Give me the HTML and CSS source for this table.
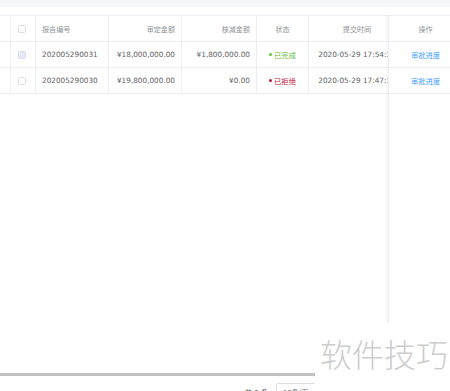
FILE: index.html
```html
<!DOCTYPE html>
<html lang="zh">
<head>
<meta charset="utf-8">
<link rel="stylesheet" href="styles.css">
</head>
<body>
<div class="page">
  <div class="topbar"></div>
  <div class="table-wrap">
    <div class="main">
      <div class="row head">
        <div class="cell"></div>
        <div class="cell center"><span class="cb"></span></div>
        <div class="cell left">报告编号</div>
        <div class="cell right">审定金额</div>
        <div class="cell right">核减金额</div>
        <div class="cell center">状态</div>
        <div class="cell center">提交时间</div>
      </div>
      <div class="row">
        <div class="cell"></div>
        <div class="cell center"><span class="cb disabled"></span></div>
        <div class="cell left">202005290031</div>
        <div class="cell right">¥18,000,000.00</div>
        <div class="cell right">¥1,800,000.00</div>
        <div class="cell center"><span class="status ok"><i class="dot"></i>已完成</span></div>
        <div class="cell center">2020-05-29 17:54:32</div>
      </div>
      <div class="row">
        <div class="cell"></div>
        <div class="cell center"><span class="cb"></span></div>
        <div class="cell left">202005290030</div>
        <div class="cell right">¥19,800,000.00</div>
        <div class="cell right">¥0.00</div>
        <div class="cell center"><span class="status no"><i class="dot"></i>已拒绝</span></div>
        <div class="cell center">2020-05-29 17:47:15</div>
      </div>
    </div>
    <div class="fixed-col">
      <div class="frow head">操作</div>
      <div class="frow"><a class="link">审批进度</a></div>
      <div class="frow"><a class="link">审批进度</a></div>
    </div>
  </div>
  <div class="hscroll"><div class="thumb"></div></div>
  <div class="pager">
    <span class="total">共 2 条</span>
    <span class="size">10条/页</span>
  </div>
  <div class="watermark">软件技巧</div>
</div>
</body>
</html>
```

FILE: styles.css
```css
html, body {
  margin: 0;
  padding: 0;
  background: #ffffff;
}
body {
  font-family: "DejaVu Sans", "Noto Sans CJK SC", sans-serif;
  font-size: 7.3px;
  color: #606266;
  width: 450px;
  height: 391px;
  overflow: hidden;
}
.page {
  position: relative;
  width: 450px;
  height: 391px;
  overflow: hidden;
}
.topbar {
  height: 7px;
  background: #f4f6fa;
  margin-bottom: 8px;
}
.table-wrap {
  position: relative;
  height: 358px;
  overflow: hidden;
}
.main {
  width: 406px;
  border-top: 1px solid #ebeef5;
}
.row {
  display: grid;
  grid-template-columns: 11px 25px 73px 73px 75px 52px 97px;
  height: 26px;
  box-sizing: border-box;
  border-bottom: 1px solid #ebeef5;
}
.cell {
  display: flex;
  align-items: center;
  border-right: 1px solid #ebeef5;
  white-space: nowrap;
  overflow: hidden;
  padding: 0 6px;
  min-width: 0;
}
.cell:first-child { padding: 0; }
.cell:nth-child(2) { padding: 0; }
.head .cell { color: #909399; font-size: 7.1px; }
.left { justify-content: flex-start; }
.right { justify-content: flex-end; }
.center { justify-content: center; }
.cb {
  display: block;
  width: 8px;
  height: 8px;
  box-sizing: border-box;
  border: 1px solid #dcdfe6;
  border-radius: 1.5px;
  background: #fff;
  margin-left: -3px;
}
.cb.disabled {
  background: #e6ebf5;
  border-color: #d6dceb;
}
.status {
  display: inline-flex;
  align-items: center;
}
.dot {
  display: inline-block;
  width: 3px;
  height: 3px;
  border-radius: 50%;
  margin-right: 2px;
}
.ok { color: #67c23a; }
.ok .dot { background: #67c23a; }
.no { color: #c0163c; }
.no .dot { background: #c0163c; }
.fixed-col {
  position: absolute;
  top: 0;
  right: 0;
  width: 62px;
  height: 308px;
  background: #fff;
  border-left: 1px solid #ebeef5;
  box-shadow: -1px 0 3px rgba(0, 0, 0, 0.06);
  box-sizing: border-box;
}
.frow {
  height: 26px;
  box-sizing: border-box;
  border-bottom: 1px solid #ebeef5;
  display: flex;
  align-items: center;
  justify-content: center;
  padding-left: 12px;
}
.frow.head {
  height: 27px;
  border-top: 1px solid #ebeef5;
  color: #909399;
  font-size: 7.1px;
}
.link {
  color: #409eff;
  text-decoration: none;
}
.hscroll {
  height: 3px;
  background: #f3f3f3;
}
.thumb {
  height: 3px;
  width: 320px;
  background: #c2c2c2;
}
.pager {
  display: flex;
  align-items: flex-start;
  padding-left: 245px;
  margin-top: 7px;
  gap: 8px;
  color: #606266;
  font-size: 7px;
}
.total {
  padding-top: 4px;
}
.size {
  border: 1px solid #dcdfe6;
  border-radius: 2px;
  padding: 3px 8px 3px 6px;
  width: 40px;
}
.watermark {
  position: absolute;
  left: 315px;
  top: 323px;
  width: 135px;
  height: 68px;
  background: #fff;
  box-sizing: border-box;
  padding: 10px 0 0 5px;
  font-family: "Noto Sans CJK SC", sans-serif;
  font-size: 32px;
  line-height: 40px;
  font-weight: 300;
  color: #cdcdcd;
  letter-spacing: 0;
  white-space: nowrap;
}
```
